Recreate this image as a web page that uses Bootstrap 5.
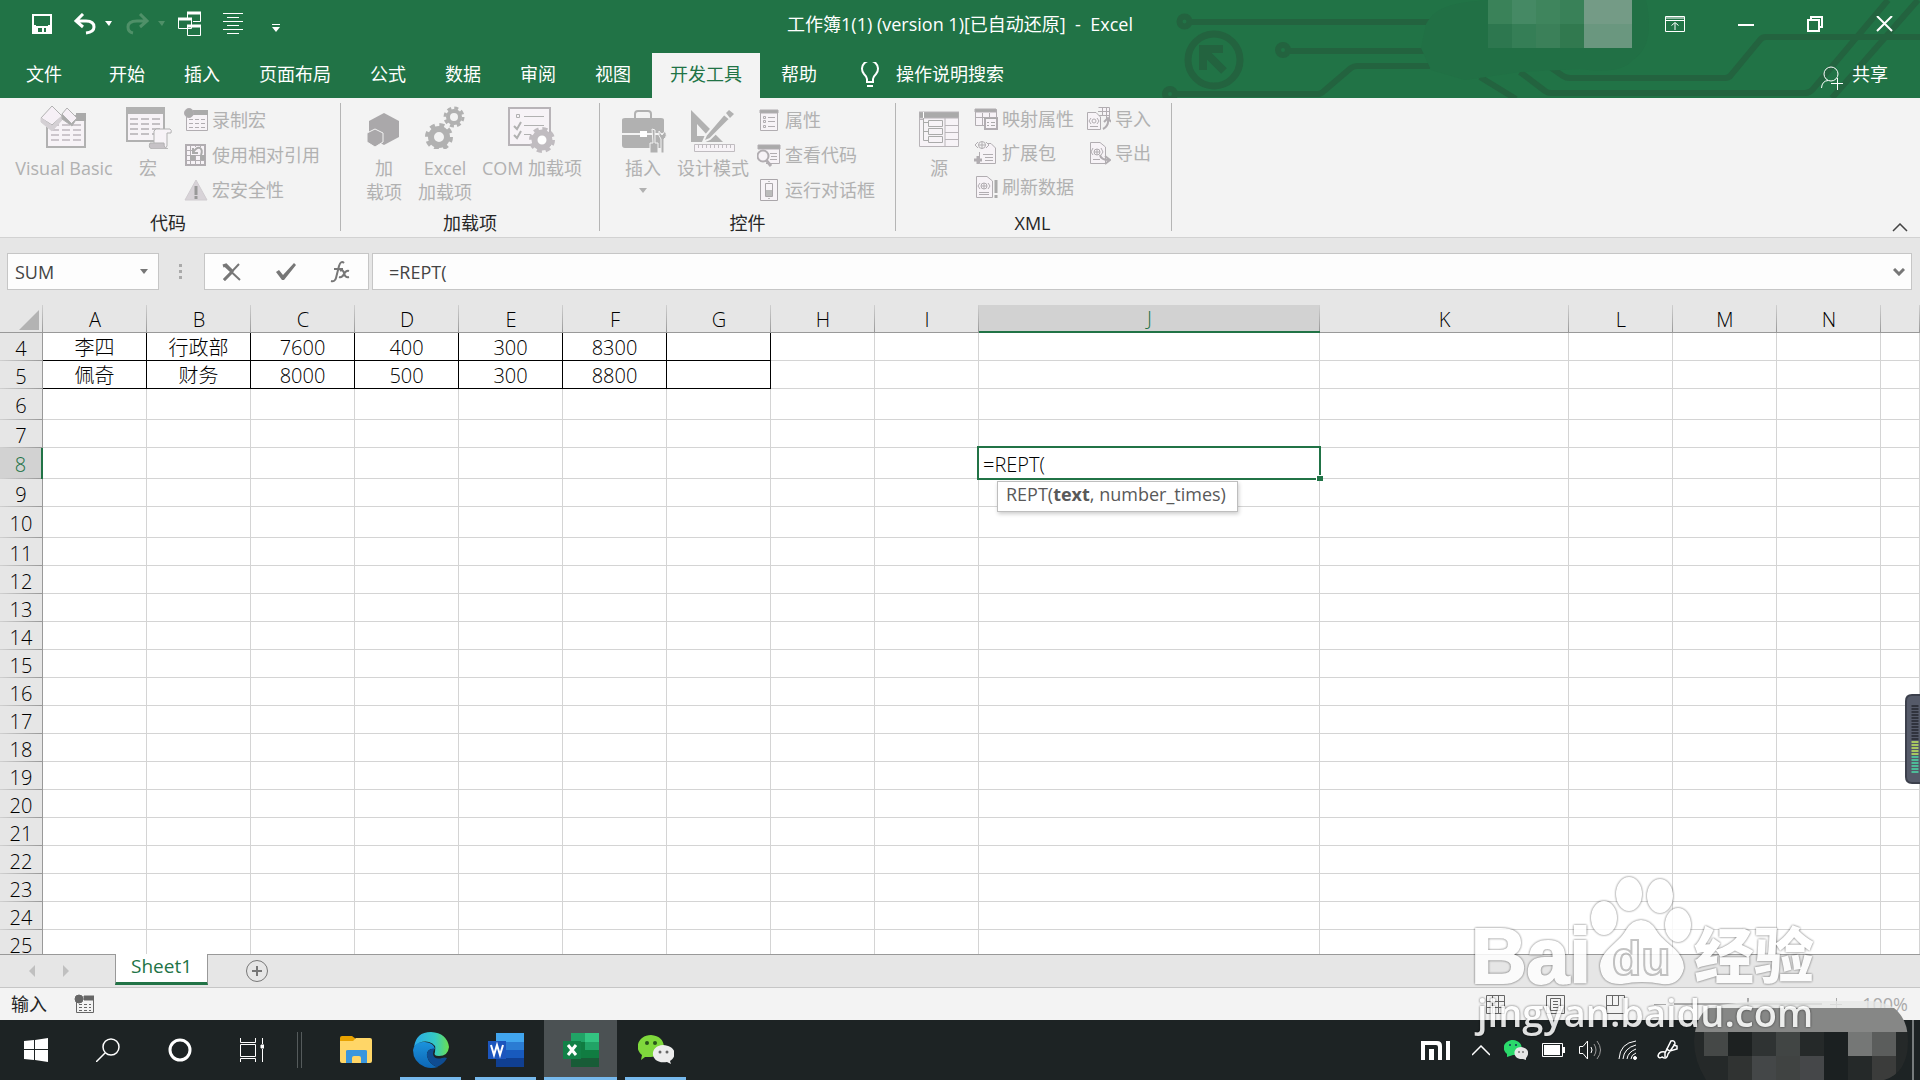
<!DOCTYPE html>
<html lang="zh-CN">
<head>
<meta charset="utf-8">
<meta name="viewport" content="width=device-width, initial-scale=1">
<title>工作簿1(1) (version 1) - Excel</title>
<link rel="stylesheet" href="https://cdn.jsdelivr.net/npm/bootstrap@5.3.0/dist/css/bootstrap.min.css">
<style>
:root{--xl:#217346;--ui:"Open Sans","Noto Sans CJK SC",sans-serif;--line:#d4d4d4}
body{font-family:var(--ui);font-size:18px;line-height:24px;color:#262626;height:100vh;overflow:hidden;background:#e6e6e6}
button{font:inherit;color:inherit;background:none;border:0;padding:0}
input{font:inherit;color:inherit;border:0;background:none;outline:0;min-width:0}
svg{display:block;flex:none}
.xl-head{background:var(--xl);color:#fff;height:98px}
.circuit{position:absolute;right:0;top:0}
.titlebar{height:39px}
.quick{left:0;top:0;height:39px;padding-left:32px}
.wincontrols{right:0;top:0;height:39px;padding-right:27px;gap:53px}
.tabs{height:45px;margin-top:14px;padding-left:8px;gap:3px}
.tabs .nav-link{color:#fff;padding:9px 18px 0;line-height:24px;height:45px;border-radius:0}
.tabs .nav-link.active{background:#f3f3f3;color:var(--xl)}
.ribbon{background:#f3f3f3;height:140px;border-bottom:1px solid #d2d2d2;color:#b1b1b1}
.rgroup{margin:5px 0 6px;border-right:1px solid #b5b5b5}
.rtools{height:103px}
.rtitle{color:#262626;line-height:34px;height:26px}
.bigbtn{line-height:24px;padding-top:2px;white-space:nowrap}
.bigbtn svg{margin:0 auto 7px}
.smallcol{margin-top:-1px}
.smallbtn{height:35px;gap:4px;white-space:nowrap}
.xmlcol .smallbtn{height:34px}
.w50{width:50px}.w52{width:52px}.w70{width:70px}.w88{width:88px}.w104{width:104px}.w40{width:40px}.w128{width:128px}
.pl17{padding-left:17px}
.fbar{padding:15px 8px 15px 7px;color:#444}
.fbox{background:#fdfdfd;border:1px solid #c6c6c6;height:37px}
.namebox{width:152px;padding:0 10px 0 5px}
.fxbox{width:165px;padding:0 18px 0 17px}
.sheetgrid{table-layout:fixed;border-collapse:separate;border-spacing:0;width:100%;font-weight:300;font-size:20px;line-height:24px;color:#000}
.sheetgrid td,.sheetgrid th{padding:0;text-align:center;font-weight:300;overflow:visible}
.sheetgrid thead th{height:28px;border-bottom:1px solid #999;background:linear-gradient(#d0d0d0,#999) right/1px 100% no-repeat #e6e6e6;padding-top:2px}
.sheetgrid tbody th{background:linear-gradient(to right,#d0d0d0,#999) bottom/100% 1px no-repeat #e6e6e6;border-right:1px solid #999;padding-top:3px}
.sheetgrid td{background:#fff;border-right:1px solid var(--line);border-bottom:1px solid var(--line)}
.sheetgrid td.boxed{border-color:#000;padding-top:2px}
.sheetgrid thead th.picked{background-color:#d2d2d2;color:var(--xl);border-bottom:2px solid var(--xl)}
.sheetgrid tbody th.picked{background-color:#d2d2d2;color:var(--xl);border-right:2px solid var(--xl)}
.r28{height:28px}.r31{height:31px}
.cnum{width:43px}.cstd{width:104px}.cj{width:341px}.ck{width:249px}
.editor{position:absolute;inset:-2px;border:2px solid var(--xl);background:#fff}
.editor input{width:100%;height:100%;padding:2px 0 0 4px;display:block}
.editor::after{content:"";position:absolute;right:-4px;bottom:-3px;width:7px;height:6px;background:var(--xl);border:solid #fff;border-width:1px 0 0 1px}
.hint{position:absolute;left:18px;top:33px;border:1px solid #bebebe;background:#fff;box-shadow:1px 2px 4px #0003;color:#595959;font-weight:400;font-size:18px;line-height:24px;padding:0 11px 5px 8px;white-space:nowrap;z-index:2}
.sheetbar{height:34px;border-top:1px solid #999;border-bottom:1px solid #c6c6c6;position:relative;z-index:1;background:#e6e6e6}
.sheettab{background:#fff;color:var(--xl);border:solid #999;border-width:0 1px;border-bottom:3px solid var(--xl);height:31px;margin-top:-1px;width:93px;line-height:24px;font-size:19px;padding-bottom:4px}
.statusbar{height:32px;background:#f3f3f3;padding:0 12px 0 11px}
.viewset{gap:41px}
.zoomrange{appearance:none;width:148px;height:2px;background:#aaa}
.zoomrange::-webkit-slider-thumb{appearance:none;width:2px;height:9px;background:#aaa;margin-top:-3px}
.taskbar{height:60px;background:#1d2324}
.tbtn{width:72px}
.tapp{width:75px;position:relative}
.tapp.running::after{content:"";position:absolute;left:7px;right:7px;bottom:0;height:3px;background:#76b9ed}
.tapp.current::before{content:"";position:absolute;inset:0 1px;background:#4b5153}
.tapp.current::after{left:1px;right:1px}
.tapp svg{position:relative}
.tray{position:relative;padding-right:241px;gap:14px}
.mosaic{position:absolute;right:0;bottom:0;z-index:3;pointer-events:none}
.stamp{position:absolute;right:96px;bottom:36px;z-index:4;pointer-events:none;opacity:.86;filter:drop-shadow(0 0 1px rgba(0,0,0,.5)) drop-shadow(0 0 1px rgba(0,0,0,.2))}
.meter{position:absolute;right:0;top:694px;z-index:4}
</style>
<script src="https://cdn.jsdelivr.net/npm/bootstrap@5.3.0/dist/js/bootstrap.bundle.min.js"></script>
</head>
<body class="d-flex flex-column position-relative">

<header class="xl-head flex-shrink-0 position-relative">
  <svg class="circuit" width="780" height="98" viewBox="0 0 780 98" fill="none" stroke="#23633f" stroke-width="6">
    <circle cx="44.500" cy="21.500" r="5"/><path d="M51 22H290"/>
    <circle cx="143" cy="50" r="5"/><path d="M149 51H290"/>
    <circle cx="74" cy="60" r="26" stroke-width="7"/>
    <path d="M83 49H63V70M63 50L84 71" stroke-width="8"/>
    <circle cx="30" cy="94" r="5"/><path d="M37 94H178Q181 94 184 91L211 68Q214 66 217 66H290"/>
    <path d="M340 77L376 99M380 72L405 91Q408 93 411 93H665Q670 93 673 89L748 0M410 67L423 76Q426 78 430 78H585Q589 78 591 75L620 40Q622 37 626 37H780M692 98L778 0"/>
    <g stroke="none"><path fill="#217045" d="M348 0C300 3 294 12 286 24L281 48L291 70L325 80L380 72L440 69Q480 75 493 60Q516 45 506 0Z"/>
    <path fill="#3a8259" d="M348 0h24v24h-24z"/><path fill="#458964" d="M372 0h24v24h-24z"/><path fill="#3f855d" d="M396 0h24v24h-24z"/><path fill="#398158" d="M420 0h24v24h-24z"/><path fill="#749b86" d="M444 0h48v24h-48z"/>
    <path fill="#2d774f" d="M348 24h24v24h-24z"/><path fill="#357e56" d="M372 24h24v24h-24z"/><path fill="#3b8059" d="M396 24h24v24h-24z"/><path fill="#31794f" d="M420 24h24v24h-24z"/><path fill="#6a977f" d="M444 24h48v24h-48z"/></g>
  </svg>
  <div class="titlebar position-relative d-flex align-items-center justify-content-center">
    <div class="quick position-absolute d-flex align-items-center">
      <button aria-label="保存" class="mt-2"><svg width="20" height="20" fill="none" stroke="#fff" stroke-width="2"><path d="M1 1H19V19H1ZM4 12H1M16 12H19"/><path fill="#fff" stroke="none" d="M2 12H18V18H14V14H12V18H10V14H6V19H2Z"/></svg></button>
      <button aria-label="撤消" class="mt-2" style="margin-left:21px"><svg width="24" height="22" fill="none" stroke="#fff" stroke-width="3"><path d="M10 1L3 8L10 14M3 8H13Q21 8 21 14Q21 19 13 20" /></svg></button>
      <button aria-label="撤消列表" class="mt-2 ms-2"><svg width="7" height="5"><path fill="#fff" d="M0 0H7L4 5Z"/></svg></button>
      <button aria-label="恢复" class="mt-2" style="margin-left:14px"><svg width="24" height="22" fill="none" stroke="#4f9068" stroke-width="3"><path d="M14 1L21 8L14 14M21 8H11Q2 8 2 14Q2 19 7 20"/></svg></button>
      <button aria-label="恢复列表" class="mt-2 ms-2"><svg width="7" height="5"><path fill="#4f9068" d="M0 0H7L4 5Z"/></svg></button>
      <button aria-label="切换窗口" class="mt-2" style="margin-left:13px"><svg width="24" height="26" fill="none" stroke="#fff"><path d="M9.500 7V1.500H22.500V10.500H15M.5 7.500H13.500V17.500H.5ZM9.500 14.500H22.500V24.500H9.500Z"/><path stroke-width="3" d="M9 2H23M0 8H14M9 15H23"/></svg></button>
      <button aria-label="居中" class="mt-2" style="margin-left:21px"><svg width="20" height="22" stroke="#fff" stroke-width="1"><path d="M0 .5H20M4 4.500H16M0 8.500H20M4 12.500H16M0 16.500H20M4 20.500H16"/></svg></button>
      <button aria-label="自定义快速访问工具栏" class="mt-3" style="margin-left:29px"><svg width="8" height="8" fill="#fff"><path d="M0 0H8V1H0ZM0 3H8L4 8Z"/></svg></button>
    </div>
    <div class="pt-2" style="white-space:pre">工作簿1(1) (version 1)[已自动还原]  -  Excel</div>
    <div class="wincontrols position-absolute d-flex align-items-center pt-2">
      <button aria-label="功能区显示选项"><svg width="20" height="16" fill="none" stroke="#fff"><path d="M.5.5H19.500V15.500H.5ZM.5 4.500H19.500M10 14V7M6.500 9.500L10 6.500L13.500 9.500"/><path d="M0 2H20"/></svg></button>
      <button aria-label="最小化"><svg width="16" height="16" stroke="#fff" stroke-width="2"><path d="M0 9H16"/></svg></button>
      <button aria-label="向下还原"><svg width="16" height="16" fill="none" stroke="#fff" stroke-width="2"><path d="M4 4V1H15V11H12M1 4H12V15H1Z"/></svg></button>
      <button aria-label="关闭"><svg width="17" height="16" stroke="#fff" stroke-width="2"><path d="M1 0L16 15M16 0L1 15"/></svg></button>
    </div>
  </div>
  <nav class="tabs nav position-relative d-flex flex-nowrap">
    <a class="nav-link me-2" href="#">文件</a><a class="nav-link" href="#">开始</a><a class="nav-link" href="#">插入</a><a class="nav-link" href="#">页面布局</a><a class="nav-link" href="#">公式</a><a class="nav-link" href="#">数据</a><a class="nav-link" href="#">审阅</a><a class="nav-link" href="#">视图</a><a class="nav-link active" href="#">开发工具</a><a class="nav-link" href="#">帮助</a>
    <a class="nav-link d-flex" href="#" style="padding-left:22px"><svg class="me-3" width="20" height="26" fill="none" stroke="#fff" stroke-width="2"><path d="M7 20V17Q7 15 4 12A8 8 0 1 1 16 12Q13 15 13 17V20ZM7 24H13"/></svg><span>操作说明搜索</span></a>
    <a class="nav-link ms-auto d-flex" href="#" style="padding-right:32px"><svg width="24" height="24" class="mt-1 me-1" fill="none" stroke="#fff"><circle cx="11" cy="8" r="7"/><path d="M1.500 22Q2 15 8 14.500M11 17.500H23M17.500 12V24"/></svg><span class="ms-1">共享</span></a>
  </nav>
</header>

<section class="ribbon flex-shrink-0 d-flex position-relative">
  <div class="rgroup" style="width:341px">
    <div class="rtools d-flex align-items-start">
      <button class="bigbtn w128"><svg width="48" height="44" fill="none" stroke="#b1b1b1"><path fill="#f7f3f7" stroke-width="2" d="M7 11H45V42H7Z"/><path fill="#aaa" stroke="none" d="M36 8H46V16H36Z"/><path stroke="#ccc6cc" stroke-width="2" stroke-dasharray="8 3" d="M11 20H43M11 25H43M11 30H43M11 35H43"/><path fill="#f6f0f6" d="M12 1L22 11L12 20L1 13Z"/><path fill="#d4d0d4" stroke="#d4d0d4" d="M1 13L12 21L22 11V15L12 26L1 17Z"/><path fill="#f6f0f6" d="M27 3L37 13L32 19L22 9Z"/><path fill="#aaa" d="M22 9L32 19V21L22 14ZM37 13L32 21V18Z"/></svg>Visual Basic</button>
      <button class="bigbtn w40"><svg width="46" height="44" style="margin-left:-2px" fill="none" stroke="#b1b1b1"><path fill="#f7f3f7" stroke-width="2" d="M1 3H38V36H1Z"/><path fill="#b1b1b1" stroke="none" d="M0 2H39V9H0Z"/><path stroke="#c4c0c4" stroke-width="2" stroke-dasharray="8 3" d="M4 14H35M4 19H35M4 24H35M4 29H35"/><path fill="#f7f3f7" d="M30 24H44Q46 25 45 28H41V41Q40 44 37 44H28V26Z"/><path fill="#c6c2c6" d="M24 38H38Q38 44 42 44H26Q22 43 24 38Z"/></svg>宏</button>
      <div class="ms-3 smallcol">
        <button class="smallbtn d-flex align-items-center"><svg width="24" height="24" fill="none" stroke="#b1adb1"><path fill="#f7f3f7" d="M2.500 3.500H23.500V22.500H2.500Z"/><path fill="#aaa" stroke="none" d="M9 2H24V7H9Z"/><path stroke-dasharray="4 2" d="M5 11.500H21M5 15.500H21M5 19.500H21"/><circle cx="5" cy="5" r="4.500" fill="#aaa"/></svg>录制宏</button>
        <button class="smallbtn d-flex align-items-center"><svg width="24" height="24" fill="none" stroke="#b1adb1"><path fill="#f7f3f7" stroke-width="2" d="M2 2H21V22H2Z"/><path d="M6.500 2V22M11.500 2V22M16.500 2V22M2 7.500H21M2 12.500H21M2 17.500H21"/><path fill="#f7f3f7" stroke="none" d="M8 4H20V12H8Z"/><path fill="#aaa" stroke="none" d="M6 12H11V17H6ZM16 12H21V17H16Z"/><path stroke="#aaa" stroke-width="2" d="M9 5V10H14M9 10Q12 4 16 5Q19 7 17 12"/></svg>使用相对引用</button>
        <button class="smallbtn d-flex align-items-center"><svg width="24" height="24"><path fill="#d8d3d8" stroke="#d0ccd0" d="M12 2L23 22H1Z"/><path stroke="#999" stroke-width="3" d="M12 8V17M12 18V21"/></svg>宏安全性</button>
      </div>
    </div>
    <div class="rtitle text-center" style="padding-right:4px">代码</div>
  </div>
  <div class="rgroup" style="width:259px">
    <div class="rtools d-flex align-items-start pl17">
      <button class="bigbtn w52"><svg width="34" height="44" fill="#aaa8aa"><path d="M17 8L32 16V32L17 40L2 32V16Z"/><path stroke="#f3f3f3" stroke-width="1" d="M8 24L16 28V37L8 42L0 37V28Z"/></svg>加<br>载项</button>
      <button class="bigbtn w70"><svg width="40" height="44" fill="none" stroke="#b1b1b1"><circle cx="14" cy="32" r="8" stroke-width="6"/><circle cx="14" cy="32" r="12" stroke-width="4" stroke-dasharray="5 4.420"/><circle cx="29" cy="12" r="6" stroke-width="4"/><circle cx="29" cy="12" r="9" stroke-width="3" stroke-dasharray="4 3.070"/></svg>Excel<br>加载项</button>
      <button class="bigbtn w104"><svg width="48" height="48" class="mb-0" fill="none" stroke="#b1b1b1"><path fill="#f7f3f7" stroke="#b8b4b8" stroke-width="2" d="M1 3H42V40H1Z"/><path d="M8.500 9.500H11.500V12.500H8.500ZM16 11.500H36M16 20.500H36M16 29.500H23"/><path stroke-width="2" d="M6 21L9 24L13 17M6 30L9 33L13 26"/><g stroke="#c0bcc0"><circle cx="34" cy="35" r="7.500" stroke-width="6" fill="#fff"/><circle cx="34" cy="35" r="11" stroke-width="4" stroke-dasharray="5 3.640"/></g></svg><div style="margin-top:3px">COM 加载项</div></button>
    </div>
    <div class="rtitle text-center">加载项</div>
  </div>
  <div class="rgroup" style="width:296px">
    <div class="rtools d-flex align-items-start pl17">
      <button class="bigbtn w52"><svg width="46" height="48" style="margin:0 0 3px 5px" fill="#b1b1b1"><path fill="none" stroke="#b1b1b1" stroke-width="2" d="M13 14V9Q13 6 16 6H26Q29 6 29 9V14"/><path d="M0 15Q0 13 3 13H39Q42 13 42 15V28H0ZM0 30H42V40Q42 43 39 43H3Q0 43 0 40Z"/><path fill="#fff" d="M18 26H25V32H18Z"/><path stroke="#f3f3f3" d="M30 24L33 25V38H36V48H28V38H31ZM37 26L40 30L43 26Q46 31 42 34V48H39V34Q36 31 37 26Z"/></svg>插入<svg width="8" height="5" class="mt-2"><path fill="#b1b1b1" d="M0 0H8L4 5Z"/></svg></button>
      <button class="bigbtn w88"><svg width="46" height="48" class="mb-0" fill="#b1b1b1"><path fill-rule="evenodd" d="M1 5L33 37H1ZM7 19V31H18Z"/><path stroke="#f3f3f3" stroke-width="2" d="M34 9L40 14L20 34L13 37L16 30Z"/><path d="M36 8L39 5L44 9L40 13Z"/><path fill="#f7f3f7" stroke="#c0bcc0" d="M4.500 39.500H44.500V46.500H4.500ZM8.500 40V43M12.500 40V43M16.500 40V43M20.500 40V43M24.500 40V43M28.500 40V43M32.500 40V43M36.500 40V43M40.500 40V43"/></svg><div style="margin-top:3px">设计模式</div></button>
      <div class="smallcol">
        <button class="smallbtn d-flex align-items-center"><svg width="24" height="24" fill="none" stroke="#b1adb1"><path fill="#f7f3f7" stroke-width="1" d="M3.500 2.500H20.500V22.500H3.500Z"/><path fill="#aaa" d="M3 2H21V5H3Z"/><path d="M6.500 8.500h2v2h-2zM6.500 12.500h2v2h-2zM6.500 17.500h2v2h-2zM11 9.500H18M11 13.500H18M11 18.500H18"/></svg>属性</button>
        <button class="smallbtn d-flex align-items-center"><svg width="24" height="24" fill="none" stroke="#b1adb1"><path fill="#f7f3f7" d="M1.500 2.500H22.500V20.500H9"/><path fill="#aaa" d="M1 2H23V6H1Z"/><path d="M13 10.500H20M14 13.500H20M13 16.500H20"/><circle cx="6" cy="13" r="5.500" fill="#f7f3f7" stroke-width="2"/><path stroke-width="3" d="M9 17L14 23"/></svg>查看代码</button>
        <button class="smallbtn d-flex align-items-center"><svg width="24" height="24" fill="none" stroke="#aaa6aa"><path fill="#f7f3f7" stroke-width="1" d="M3.500 1.500H20.500V22.500H3.500Z"/><path d="M8.500 5.500H15.500V18.500H8.500Z"/><path fill="#bbb" stroke="none" d="M9 12H15V18H9ZM11 3H13V4H11ZM11 20H13V21H11Z"/></svg>运行对话框</button>
      </div>
    </div>
    <div class="rtitle text-center">控件</div>
  </div>
  <div class="rgroup" style="width:276px">
    <div class="rtools d-flex align-items-start xmlcol" style="padding-left:18px">
      <button class="bigbtn w50"><svg width="40" height="44" fill="none" stroke="#b8b4b8"><path fill="#f7f3f7" d="M.5 7.500H39.500V41.500H.5ZM26 20.500H39M26 27.500H39M26 34.500H39M26 12V41M0 14.500H4"/><path fill="#aaa" d="M0 7H40V13H0Z"/><path stroke="#fff" d="M4.500 7V13"/><path stroke="#aaa" d="M4.500 13V35.500H9M4.500 17.500H9M4.500 26.500H9"/><path fill="#f7f3f7" stroke="#aaa" stroke-width="1" d="M9.500 15.500H23.500V21.500H9.500ZM9.500 23.500H23.500V29.500H9.500ZM9.500 31.500H23.500V37.500H9.500Z"/></svg>源</button>
      <div class="smallcol" style="margin-left:10px;width:113px">
        <button class="smallbtn d-flex align-items-center"><svg width="24" height="24" fill="none" stroke="#b1adb1"><path fill="#f7f3f7" d="M1.500 2.500H22.500V18.500H1.500ZM8.500 6V18M15.500 6V18M1 10.500H15"/><path fill="#aaa" d="M1 2H22V5H1Z"/><path fill="#f7f3f7" stroke-width="2" d="M11 11H23V22H11Z"/><path stroke="#aaa" d="M10 11.500H24M13 15.500H15M17 15.500H21M13 18.500H15M17 18.500H21"/></svg>映射属性</button>
        <button class="smallbtn d-flex align-items-center"><svg width="24" height="24" fill="none" stroke="#b1adb1"><path fill="#f7f3f7" d="M5.500 11V22.500H21.500V7L17 2.500H14"/><path d="M9 13.500H19M11 16.500H19M11 19.500H19M4 1L1 4L4 7M12 1L15 4L12 7"/><circle cx="8" cy="4" r="3.500"/><path d="M5 4H11M8 1V8"/><path stroke-width="3" d="M0 19H8M4 15V23"/></svg>扩展包</button>
        <button class="smallbtn d-flex align-items-center"><svg width="24" height="24" fill="none" stroke="#b1adb1"><path fill="#f7f3f7" d="M2.500 1.500H13L18.500 6V22.500H2.500Z"/><path d="M5 17.500H15M5 19.500H15M6 8L4 11L6 14M14 8L16 11L14 14"/><circle cx="10" cy="11" r="3"/><path d="M7 11H13M10 8V14"/><path stroke="#aaa" stroke-width="3" d="M22 5V18M22 20V23"/></svg>刷新数据</button>
      </div>
      <div class="smallcol">
        <button class="smallbtn d-flex align-items-center"><svg width="24" height="24" fill="none" stroke="#b1adb1"><path fill="#f7f3f7" d="M11.500.5H22.500V12M11 4.500H22M11 8.500H22M15.500 0V8M19.500 0V12"/><path fill="#f7f3f7" d="M.5 5.500H9L13.500 10V22.500H.5Z"/><path d="M3 19.500H11M4 11L2 14L4 17M10 11L12 14L10 17"/><circle cx="7" cy="14" r="2"/><path stroke-width="2" d="M16 22Q22 19 21 12M17 15L21 11L24 15"/></svg>导入</button>
        <button class="smallbtn d-flex align-items-center"><svg width="24" height="24" fill="none" stroke="#b1adb1"><path fill="#f7f3f7" d="M3.500 1.500H13L18.500 6V22.500H3.500Z"/><path d="M6 18.500H13M6 7L4 11L6 14M14 7L16 11L14 14"/><circle cx="10" cy="11" r="3"/><path d="M7 11H13M10 8V14"/><path stroke-width="2" d="M13 14Q14 19 22 19M18 15L23 19L18 23"/></svg>导出</button>
      </div>
    </div>
    <div class="rtitle text-center" style="padding-right:2px">XML</div>
  </div>
  <button class="position-absolute end-0 bottom-0 mb-1 me-2" aria-label="折叠功能区" style="padding:0 4px 1px"><svg width="16" height="9" fill="none" stroke="#444" stroke-width="1.500"><path d="M1 8L8 1L15 8"/></svg></button>
</section>

<section class="fbar flex-shrink-0 d-flex align-items-center">
  <div class="fbox namebox d-flex align-items-center"><input class="flex-grow-1" style="width:100px" aria-label="名称框" value="SUM"><button aria-label="名称列表"><svg width="8" height="5"><path fill="#777" d="M0 0H8L4 5Z"/></svg></button></div>
  <svg width="45" height="16" fill="#aaa"><path d="M20 0h3v3h-3zM20 6h3v3h-3zM20 12h3v3h-3z"/></svg>
  <div class="fbox fxbox d-flex align-items-center justify-content-between">
    <button aria-label="取消"><svg width="20" height="18" fill="none" stroke="#777" stroke-width="2"><path d="M2 2L18 17M17 1L2 17"/><path stroke-width="3" d="M1 3L4 2L11 9M2 17L10 9"/></svg></button>
    <button aria-label="输入"><svg width="20" height="18"><path fill="#777" d="M0 9L3 7L7 12L18 0L20 2L8 17H6Z"/></svg></button>
    <button aria-label="插入函数"><svg width="20" height="24" fill="none" stroke="#777"><path stroke-width="2" d="M14 3Q11 0 9 6L6 18Q5 22 1 21M4 9H13"/><path stroke-width="2" d="M10 11Q13 9 14 13Q15 18 19 17M19 11Q16 10 14 14Q12 18 9 17"/></svg></button>
  </div>
  <div class="fbox flex-grow-1 d-flex align-items-center" style="margin-left:3px;padding:0 6px 0 14px"><input class="flex-grow-1" aria-label="编辑栏" value="=REPT("><button aria-label="展开编辑栏"><svg width="12" height="8" fill="none" stroke="#777" stroke-width="3"><path d="M1 1L6 6L11 1"/></svg></button></div>
</section>

<main class="flex-grow-1 overflow-hidden bg-white" style="min-height:0">
  <table class="sheetgrid">
    <colgroup><col class="cnum"><col class="cstd"><col class="cstd"><col class="cstd"><col class="cstd"><col class="cstd"><col class="cstd"><col class="cstd"><col class="cstd"><col class="cstd"><col class="cj"><col class="ck"><col class="cstd"><col class="cstd"><col class="cstd"><col></colgroup>
    <thead><tr id="letters"><th><svg class="ms-auto me-1" width="20" height="20"><path fill="#b3b3b3" d="M20 0V20H0Z"/></svg></th></tr></thead>
    <tbody id="cells"></tbody>
  </table>
</main>

<footer class="flex-shrink-0">
  <div class="sheetbar d-flex align-items-start">
    <button aria-label="上一张" style="margin:10px 0 0 29px"><svg width="6" height="12"><path fill="#c0c0c0" d="M6 0V12L0 6Z"/></svg></button>
    <button aria-label="下一张" style="margin:10px 0 0 28px"><svg width="6" height="12"><path fill="#c0c0c0" d="M0 0V12L6 6Z"/></svg></button>
    <button class="sheettab" style="margin-left:46px">Sheet1</button>
    <button aria-label="新工作表" style="margin:5px 0 0 38px"><svg width="22" height="22" fill="none" stroke="#777"><circle cx="11" cy="11" r="10.500"/><path stroke-width="2" d="M6 11H16M11 6V16"/></svg></button>
  </div>
  <div class="statusbar d-flex align-items-center">
    <span>输入</span>
    <button class="ms-4" aria-label="录制宏" style="padding-left:3px"><svg width="20" height="20" fill="none" stroke="#666"><path d="M2.500 4V18.500H19.500V4"/><path fill="#666" d="M10 2H20V6H10Z"/><path stroke-dasharray="3 2" d="M5 10.500H17M5 13.500H17M5 16.500H17"/><circle cx="5" cy="5" r="4" fill="#666"/></svg></button>
    <div class="ms-auto d-flex align-items-center viewset">
      <button aria-label="普通"><svg width="19" height="19" fill="none" stroke="#666"><path d="M.5.500H18.500V18.500H.5ZM6.500 0V19M12.500 0V19M0 6.500H19M0 12.500H19"/></svg></button>
      <button aria-label="页面布局"><svg width="19" height="19" fill="none" stroke="#666"><path d="M.5.500H18.500V18.500H.5ZM4.500 3.500H14.500V15.500H4.500ZM7 6.500H12M7 9.500H12M7 12.500H12"/></svg></button>
      <button aria-label="分页预览"><svg width="19" height="19" fill="none" stroke="#666"><path d="M.5.500H18.500V18.500H.5ZM.5 10.500H12.500V.5M6.500 0V10"/></svg></button>
    </div>
    <div class="d-flex align-items-center" style="margin-left:29px;color:#aaa">
      <button aria-label="缩小"><svg width="12" height="12" stroke="#aaa"><path d="M0 6.500H12"/></svg></button>
      <input class="zoomrange mx-2" type="range" aria-label="缩放" value="50">
      <button aria-label="放大"><svg width="12" height="12" stroke="#aaa"><path d="M0 6.500H12M6.500 0V12"/></svg></button>
      <span style="margin-left:20px">100%</span>
    </div>
  </div>
  <div class="taskbar d-flex align-items-stretch">
    <button class="tbtn" aria-label="开始"><svg class="mx-auto" width="24" height="24" fill="#fff"><path d="M0 3L10 2V11H0ZM11 2L24 0V11H11ZM0 12H10V22L0 21ZM11 12H24V24L11 22Z"/></svg></button>
    <button class="tbtn" aria-label="搜索"><svg class="mx-auto" width="24" height="24" fill="none" stroke="#fff" stroke-width="1.500"><circle cx="15" cy="9" r="8"/><path d="M9 15L0 24"/></svg></button>
    <button class="tbtn" aria-label="Cortana"><svg class="mx-auto" width="24" height="24" fill="none" stroke="#fff" stroke-width="3"><circle cx="12" cy="12" r="10"/></svg></button>
    <button class="tbtn" aria-label="任务视图"><svg class="mx-auto" width="24" height="24" fill="none" stroke="#fff" stroke-width="1"><path d="M.5 0V4.500H15.500V0M.5 6.500H15.500V18.500H.5ZM.5 24V20.500H15.500V24M22.500 0V6M22.500 11V24"/><path fill="#fff" d="M21 7H24V10H21Z"/></svg></button>
    <svg class="align-self-center" width="30" height="36" stroke="#555b5c"><path d="M9.500 0V36M13.500 0V36"/></svg>
    <button class="tapp" aria-label="文件资源管理器"><svg class="mx-auto" width="32" height="28"><path fill="#e8a200" d="M0 2Q0 0 2 0H12L16 3V10H0Z"/><path fill="#ffd667" d="M0 5H13L16 2H30Q32 2 32 4V25Q32 27 30 27H2Q0 27 0 25Z"/><path fill="#3a96dd" d="M6 15Q6 14 8 14H25Q27 14 27 15V27H21V22Q21 20 19 20H14Q12 20 12 22V27H6Z"/></svg></button>
    <button class="tapp running" aria-label="Edge"><svg class="mx-auto" width="36" height="36"><defs><linearGradient id="eg"><stop offset="0" stop-color="#2aa9e8"/><stop offset=".6" stop-color="#35c9c4"/><stop offset="1" stop-color="#6be04f"/></linearGradient><linearGradient id="eb" x2="0" y2="1"><stop stop-color="#1b93dc"/><stop offset="1" stop-color="#0d66b5"/></linearGradient></defs><path fill="url(#eg)" d="M1 15Q3 0 18 0Q34 1 36 15Q35 24 26 24Q20 24 22 20Q24 12 16 10Q8 8 1 15Z"/><path fill="url(#eb)" d="M0 18Q2 9 12 10Q21 11 22 17Q13 16 14 24Q16 33 25 35Q18 37 12 35Q0 30 0 18Z"/><path fill="#0f4c91" d="M22 16Q13 17 14 24Q16 32 24 35Q31 32 34 26Q32 25 29 26Q21 28 20 22Q20 19 22 16Z"/></svg></button>
    <button class="tapp running" aria-label="Word"><svg class="mx-auto" width="36" height="34"><path fill="#41a5ee" d="M8 0H36V9H8Z"/><path fill="#2b7cd3" d="M8 9H36V17H8Z"/><path fill="#185abd" d="M8 17H36V25H8Z"/><path fill="#103f91" d="M8 25H36V34H8Z"/><path fill="#1c55bd" d="M0 8H18V26H0Z"/><path fill="none" stroke="#fff" stroke-width="2" d="M3 12L6 22L9 12L12 22L15 12"/></svg></button>
    <button class="tapp running current" aria-label="Excel"><svg class="mx-auto" width="36" height="34"><path fill="#21a366" d="M8 0H36V17H8Z"/><path fill="#33c481" d="M22 0H36V9H22Z"/><path fill="#107c41" d="M8 9H22V26H8ZM22 17H36V26H22Z"/><path fill="#185c37" d="M8 25H36V34H8Z"/><path fill="#128047" d="M0 8H18V26H0Z"/><path stroke="#fff" stroke-width="3" d="M5 12L13 22M13 12L5 22"/></svg></button>
    <button class="tapp running" aria-label="微信"><svg class="mx-auto" width="36" height="30"><path fill="#7fd83c" d="M13 0C30 1 30 21 13 22L7 22L3 25L4 20C-5 13 1 0 13 0Z"/><circle cx="9" cy="8" r="2" fill="#28551a"/><circle cx="17" cy="8" r="2" fill="#28551a"/><path fill="#ececec" d="M25 10C39 11 39 22 32 26L33 29L29 27C12 30 10 11 25 10Z"/><circle cx="22" cy="17" r="1.500" fill="#666"/><circle cx="29" cy="17" r="1.500" fill="#666"/></svg></button>
    <div class="tray ms-auto d-flex align-items-center">
      <button aria-label="小米"><svg width="29" height="19" fill="#fff"><path d="M0 0H16Q21 0 21 5V19H17V6Q17 4 15 4H4V19H0ZM8 8H13V19H8ZM25 0H29V19H25Z"/></svg></button>
      <button class="ms-2" aria-label="显示隐藏的图标"><svg width="18" height="11" fill="none" stroke="#fff" stroke-width="1.500"><path d="M0 10L9 1L18 10"/></svg></button>
      <button aria-label="微信"><svg width="24" height="20"><path fill="#2bd96b" d="M9 0C21 1 20 15 9 15L3 17V14C-4 8 1 0 9 0Z"/><circle cx="6" cy="5" r="1" fill="#135"/><circle cx="12" cy="5" r="1" fill="#135"/><path fill="#e6e6e6" d="M17 7C26 8 25 15 22 18V20L19 19C8 20 8 7 17 7Z"/><circle cx="15" cy="12" r="1" fill="#777"/><circle cx="19" cy="12" r="1" fill="#777"/></svg></button>
      <button aria-label="电池"><svg width="23" height="14"><path fill="none" stroke="#fff" d="M.5.500H20.500V13.500H.5Z"/><path fill="#fff" d="M2 2H18V12H2ZM21 4H23V10H21Z"/></svg></button>
      <button aria-label="音量"><svg width="23" height="20" fill="none" stroke="#fff" stroke-width="1"><path d="M.5 6.500H4L8.500 1V19L4 13.500H.5ZM12 7Q14 10 12 13"/><path stroke="#999" d="M15 4Q19 10 15 16M18 1Q25 10 18 19"/></svg></button>
      <button aria-label="网络" style="margin-left:2px"><svg width="20" height="20" fill="none" stroke="#fff" stroke-width="1"><path d="M1 19Q2 3 18 1M5 19Q6 8 18 5M9 19Q10 12 18 9M13 19Q13 15 18 13"/><circle cx="17" cy="18" r="1.500" fill="#fff"/></svg></button>
      <button aria-label="墨迹工作区" style="margin-left:5px"><svg width="22" height="22" fill="none" stroke="#fff" stroke-width="1.500"><path d="M8 13Q2 12 1 17Q2 20 5 18Q10 21 11 15L18 5Q18 1 14 2L8 14V18M9 10L13 12L20 10V7L16 6"/></svg></button>
    </div>
  </div>
</footer>

<svg class="mosaic" width="226" height="79" viewBox="0 0 226 79">
  <defs><clipPath id="blob"><path d="M0 40Q2 6 25 4L60 0H160Q195 -2 205 12Q214 22 214 40Q214 72 190 79H12Q0 60 0 40Z"/></clipPath></defs>
  <g clip-path="url(#blob)">
    <path fill="#e6e7e6" fill-opacity=".8" d="M0 0H214V7H0Z"/><path fill="#868786" d="M0 7H214V31H0Z"/><path fill="#252929" d="M0 31H214V79H0Z"/>
    <path fill="#454847" d="M10 31h24v24h-24z"/><path fill="#1d2121" d="M34 31h24v24h-24z"/><path fill="#2f3333" d="M58 31h24v24h-24z"/><path fill="#414544" d="M82 31h24v24h-24z"/><path fill="#1b2021" d="M130 31h24v48h-24z"/><path fill="#757776" d="M154 31h24v24h-24z"/><path fill="#5b5d5c" d="M178 31h24v24h-24z"/>
    <path fill="#303332" d="M34 55h24v24h-24z"/><path fill="#444748" d="M58 55h24v24h-24z"/><path fill="#404342" d="M82 55h24v24h-24z"/><path fill="#454749" d="M106 55h24v24h-24z"/><path fill="#3b3c3b" d="M178 55h24v24h-24z"/>
  </g>
  <path fill="#777c7d" d="M218 19h2v60h-2z"/>
</svg>

<svg class="stamp" width="354" height="174" viewBox="1470 870 354 174" fill="#fff">
  <ellipse cx="1604" cy="918" rx="13" ry="17"/><ellipse cx="1629" cy="894" rx="13" ry="17"/><ellipse cx="1660" cy="896" rx="13" ry="17"/><ellipse cx="1678" cy="925" rx="13" ry="17"/>
  <path d="M1641 920Q1650 920 1656 930C1664 944 1684 950 1684 968Q1680 986 1662 984Q1642 980 1622 984Q1601 985 1600 966C1601 950 1618 944 1626 930Q1632 920 1641 920Z"/>
  <g font-family="Liberation Sans,sans-serif" font-weight="700"><text x="1471" y="983" font-size="77" stroke="#fff" stroke-width="2">Bai</text>
  <text x="1612" y="975" font-size="48" stroke="#bbb" stroke-width="2">du</text></g>
  <text x="1694" y="978" font-size="60" font-weight="900" font-family="Noto Sans CJK SC,sans-serif">经验</text>
  <text x="1477" y="1027" font-size="38" font-weight="600" font-family="Open Sans,sans-serif">jingyan.baidu.com</text>
</svg>

<svg class="meter" width="15" height="90"><path fill="#555a69" stroke="#3c404c" stroke-width="2" d="M16 1H7Q1 1 1 7V83Q1 89 7 89H16Z"/><path stroke="#30333d" stroke-width="7" stroke-dasharray="2 1" d="M10 11V47"/><path stroke="#a8c860" stroke-width="7" stroke-dasharray="2 1" d="M10 47V62"/><path stroke="#4dbb98" stroke-width="7" stroke-dasharray="2 1" d="M10 62V80"/></svg>

<script>
const cols='ABCDEFGHIJKLMN'.split('');
const data={4:['李四','行政部','7600','400','300','8300',''],5:['佩奇','财务','8000','500','300','8800','']};
const letters=document.getElementById('letters'),cells=document.getElementById('cells');
cols.concat('').forEach(c=>{const h=document.createElement('th');h.scope='col';h.textContent=c;if(c==='J')h.className='picked';letters.append(h)});
for(let r=4;r<=25;r++){
  const tr=document.createElement('tr');tr.className=[6,8,10].includes(r)?'r31':'r28';
  const h=document.createElement('th');h.scope='row';h.textContent=r;if(r===8)h.className='picked';tr.append(h);
  cols.concat('').forEach((c,i)=>{
    const td=document.createElement('td');
    if(data[r]&&i<7){td.className='boxed';td.textContent=data[r][i]}
    if(r===8&&c==='J'){td.className='position-relative';td.innerHTML='<div class="editor"><input aria-label="J8" value="=REPT("></div><div class="hint">REPT(<b>text</b>, number_times)</div>'}
    tr.append(td)});
  cells.append(tr);
}
</script>
</body>
</html>
